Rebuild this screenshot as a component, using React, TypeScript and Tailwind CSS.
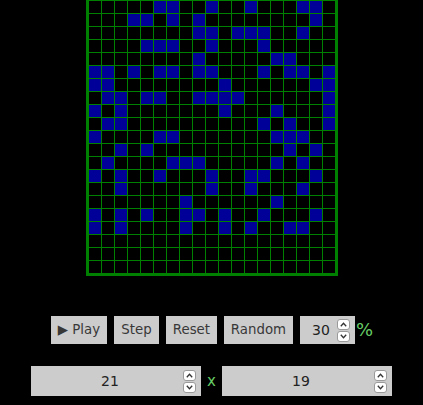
import React from "react";

const ALIVE: number[][] = [
  [5, 6, 9, 12, 16, 17],
  [3, 4, 6, 8, 17],
  [8, 9, 11, 12, 13, 16],
  [4, 5, 6, 9, 13],
  [8, 14, 15],
  [0, 1, 3, 5, 6, 8, 9, 13, 15, 16, 18],
  [0, 1, 10, 17, 18],
  [1, 2, 4, 5, 8, 9, 10, 11, 18],
  [0, 2, 10, 14, 18],
  [1, 2, 13, 15, 18],
  [0, 5, 6, 14, 15, 16],
  [2, 4, 15, 17],
  [1, 6, 7, 8, 14, 16],
  [0, 2, 5, 9, 12, 13, 17],
  [2, 9, 12, 16],
  [7, 14],
  [0, 2, 4, 7, 8, 10, 13, 17],
  [0, 2, 7, 10, 12, 15, 16],
  [],
  [],
  [],
];
const COLS = 19;

function Chevron({ up }: { up: boolean }) {
  return (
    <svg width="7" height="5" viewBox="0 0 7 5" className="block">
      <polyline
        points={up ? "0.8,4.2 3.5,1.2 6.2,4.2" : "0.8,0.8 3.5,3.8 6.2,0.8"}
        fill="none"
        stroke="#333"
        strokeWidth="1.3"
      />
    </svg>
  );
}

function Spinner({ h }: { h: string }) {
  const box =
    "w-[13px] bg-white border border-[#9a9a9a] rounded-[3px] flex items-center justify-center";
  return (
    <div className="flex flex-col gap-px">
      <div className={`${box} ${h}`}>
        <Chevron up />
      </div>
      <div className={`${box} ${h}`}>
        <Chevron up={false} />
      </div>
    </div>
  );
}

function Btn({ w, children }: { w: string; children: React.ReactNode }) {
  return (
    <button
      className={`${w} h-[28px] bg-[#cccccc] text-[#383838] text-[13.333px] flex items-center justify-center whitespace-nowrap`}
    >
      {children}
    </button>
  );
}

export default function App() {
  return (
    <div
      className="min-h-screen bg-black flex flex-col items-center"
      style={{ fontFamily: '"DejaVu Sans", sans-serif' }}
    >
      <div className="bg-[#008000] pt-px px-[3px] pb-[3px]">
        <div className="grid grid-cols-[repeat(19,12px)] auto-rows-[12px] gap-px">
          {ALIVE.map((row, r) =>
            Array.from({ length: COLS }, (_, c) => (
              <div
                key={`${r}-${c}`}
                className={row.includes(c) ? "bg-[#000099]" : "bg-black"}
              />
            ))
          )}
        </div>
      </div>

      <div className="mt-[40px] flex items-center gap-[7px] pl-[1px]">
        <Btn w="w-[56px]">▶ Play</Btn>
        <Btn w="w-[45px]">Step</Btn>
        <Btn w="w-[51px]">Reset</Btn>
        <Btn w="w-[69px]">Random</Btn>
        <div className="flex items-center">
          <div className="w-[55px] h-[28px] bg-[#cccccc] flex items-center justify-end pr-[5px]">
            <span className="text-[14px] text-[#222] mr-[7px]">30</span>
            <Spinner h="h-[11px]" />
          </div>
          <span className="ml-[1px] text-[18px] text-[#66cc66] leading-none">%</span>
        </div>
      </div>

      <div className="mt-[22px] flex items-center">
        <div className="w-[170px] h-[30px] bg-[#cccccc] flex items-center pl-[6px] pr-[5px]">
          <span className="flex-1 text-center text-[14px] text-[#222]">21</span>
          <Spinner h="h-[11px]" />
        </div>
        <span className="w-[21px] text-center text-[15px] text-[#66cc66] leading-none">x</span>
        <div className="w-[170px] h-[30px] bg-[#cccccc] flex items-center pl-[6px] pr-[5px]">
          <span className="flex-1 text-center text-[14px] text-[#222]">19</span>
          <Spinner h="h-[11px]" />
        </div>
      </div>
    </div>
  );
}
